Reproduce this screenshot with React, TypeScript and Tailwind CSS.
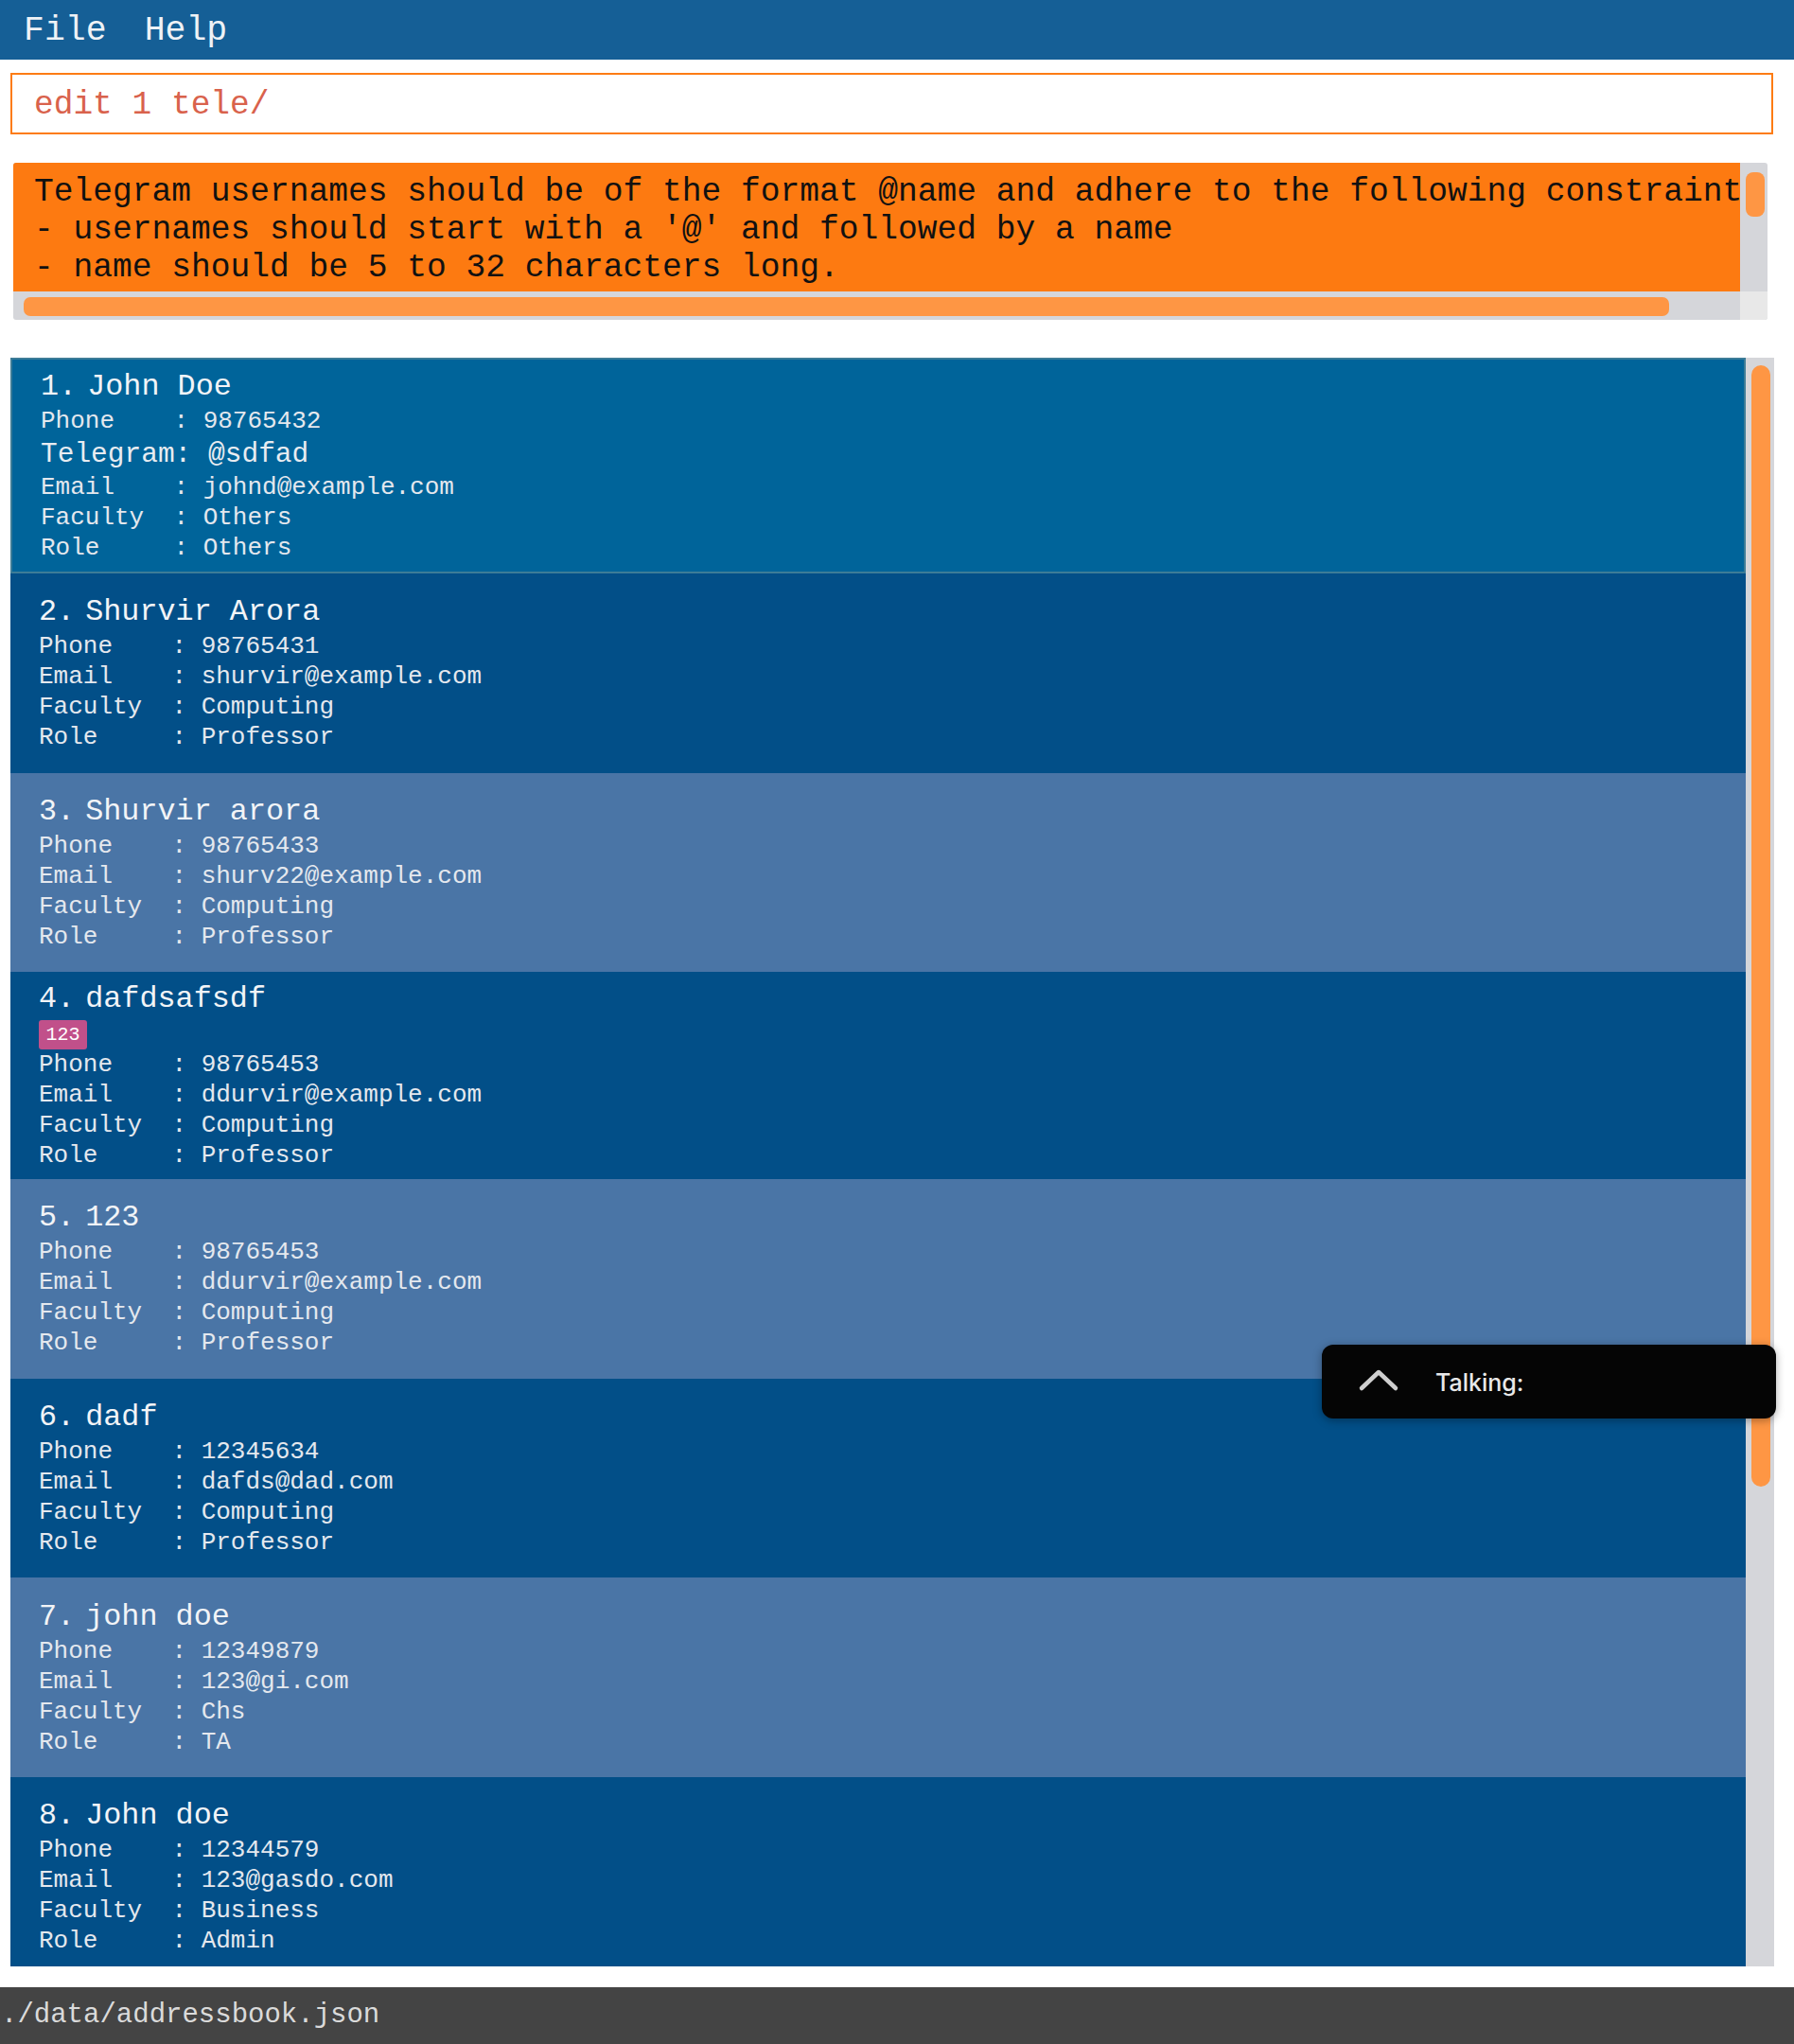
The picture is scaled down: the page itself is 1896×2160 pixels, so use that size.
const mono = "font-['Liberation_Mono','Courier_New',monospace]";

type Person = {
  name: string;
  phone: string;
  telegram?: string;
  email: string;
  faculty: string;
  role: string;
  tags?: string[];
};

const people: Person[] = [
  { name: "John Doe", phone: "98765432", telegram: "@sdfad", email: "johnd@example.com", faculty: "Others", role: "Others" },
  { name: "Shurvir Arora", phone: "98765431", email: "shurvir@example.com", faculty: "Computing", role: "Professor" },
  { name: "Shurvir arora", phone: "98765433", email: "shurv22@example.com", faculty: "Computing", role: "Professor" },
  { name: "dafdsafsdf", phone: "98765453", email: "ddurvir@example.com", faculty: "Computing", role: "Professor", tags: ["123"] },
  { name: "123", phone: "98765453", email: "ddurvir@example.com", faculty: "Computing", role: "Professor" },
  { name: "dadf", phone: "12345634", email: "dafds@dad.com", faculty: "Computing", role: "Professor" },
  { name: "john doe", phone: "12349879", email: "123@gi.com", faculty: "Chs", role: "TA" },
  { name: "John doe", phone: "12344579", email: "123@gasdo.com", faculty: "Business", role: "Admin" },
];

function Field({ label, value }: { label: string; value: string }) {
  return (
    <div className="h-[32px] leading-[32px] text-[26px] whitespace-pre text-[#e4e8ee]">
      {label.padEnd(9, " ")}: {value}
    </div>
  );
}

function PersonCard({ person, index }: { person: Person; index: number }) {
  const selected = index === 0;
  const bg = selected
    ? "bg-[#00649a] border-2 border-[#3d7c97]"
    : index % 2 === 1
      ? "bg-[#024f88]"
      : "bg-[#4a75a6]";

  return (
    <div className={`${bg} min-h-[210.6px] py-[9px] pl-[30px] flex flex-col justify-center shrink-0`}>
      <div className="h-[40px] leading-[40px] text-[31.8px] whitespace-pre text-[#f2f4f7] flex items-baseline">
        <span>{index + 1}.</span>
        <span className="ml-[11px]">{person.name}</span>
      </div>
      {person.tags && (
        <div className="h-[33px] flex items-start pt-[2px] gap-2">
          {person.tags.map((t) => (
            <span
              key={t}
              className="h-[31px] w-[51px] rounded-[3px] bg-[#c1508a] text-white text-[20px] leading-[31px] text-center"
            >
              {t}
            </span>
          ))}
        </div>
      )}
      <Field label="Phone" value={person.phone} />
      {person.telegram && (
        <div className="h-[38px] leading-[38px] text-[29.5px] whitespace-pre text-[#e8ecf1]">
          Telegram: {person.telegram}
        </div>
      )}
      <Field label="Email" value={person.email} />
      <Field label="Faculty" value={person.faculty} />
      <Field label="Role" value={person.role} />
    </div>
  );
}

function ChevronUp() {
  return (
    <svg width="44" height="26" viewBox="0 0 44 26" fill="none">
      <path d="M4 22 L22 5 L40 22" stroke="#cfcfcf" strokeWidth="4.5" strokeLinecap="round" strokeLinejoin="round" />
    </svg>
  );
}

export default function App() {
  return (
    <div className={`relative w-[1896px] h-[2160px] bg-white flex flex-col ${mono}`}>
      {/* menu bar */}
      <div className="h-[63px] bg-[#155f96] flex items-center pl-[25px] pt-[3px] gap-[40px] text-[36.5px] text-[#eef2f6] shrink-0">
        <span>File</span>
        <span>Help</span>
      </div>

      {/* command box */}
      <div className="mt-[14px] ml-[11px] mr-[22px] h-[65px] border-2 border-[#fd7c14] flex items-center pl-[23px] pt-[2px] text-[34.5px] text-[#d9624c] shrink-0">
        edit 1 tele/
      </div>

      {/* result display */}
      <div className="mt-[30px] ml-[14px] mr-[28px] h-[166px] rounded-[3px] bg-[#d5d6da] overflow-hidden flex flex-col shrink-0">
        <div className="flex h-[136px]">
          <div className="flex-1 bg-[#fd7a11] overflow-hidden pl-[22px] pt-[11px] text-[34.6px] leading-[40px] text-[#111] whitespace-pre">
            <div>Telegram usernames should be of the format @name and adhere to the following constraints:</div>
            <div>- usernames should start with a '@' and followed by a name</div>
            <div>- name should be 5 to 32 characters long.</div>
          </div>
          <div className="w-[29px] pt-[10px] pl-[6px]">
            <div className="w-[20px] h-[47px] rounded-[8px] bg-[#fe9644]" />
          </div>
        </div>
        <div className="flex h-[30px]">
          <div className="flex-1 pt-[6px] pl-[11px]">
            <div className="w-[1739px] h-[20px] rounded-[7px] bg-[#fe9644]" />
          </div>
          <div className="w-[29px] bg-[#e8e8e8]" />
        </div>
      </div>

      {/* person list */}
      <div className="mt-[40px] ml-[11px] mr-[21px] h-[1700px] flex overflow-hidden shrink-0">
        <div className="flex-1 flex flex-col overflow-hidden">
          {people.map((p, i) => (
            <PersonCard key={i} person={p} index={i} />
          ))}
        </div>
        <div className="w-[30px] bg-[#d5d6da] pt-[8px] pl-[6px]">
          <div className="w-[20px] h-[1185px] rounded-[10px] bg-[#fe9644]" />
        </div>
      </div>

      {/* status bar */}
      <div className="mt-[22px] h-[60px] bg-[#444444] flex items-center pl-[1px] text-[29px] text-[#dadada] shrink-0">
        ./data/addressbook.json
      </div>

      {/* talking overlay */}
      <div className="absolute left-[1397px] top-[1421px] w-[480px] h-[78px] rounded-[12px] bg-[#050505] shadow-[0_2px_10px_rgba(0,0,0,0.35)] flex items-center font-['Inter',sans-serif]">
        <div className="ml-[38px] mb-[4px]">
          <ChevronUp />
        </div>
        <span className="ml-[38px] mt-[3px] text-[25px] font-medium text-[#e8e8e8]">Talking:</span>
      </div>
    </div>
  );
}
